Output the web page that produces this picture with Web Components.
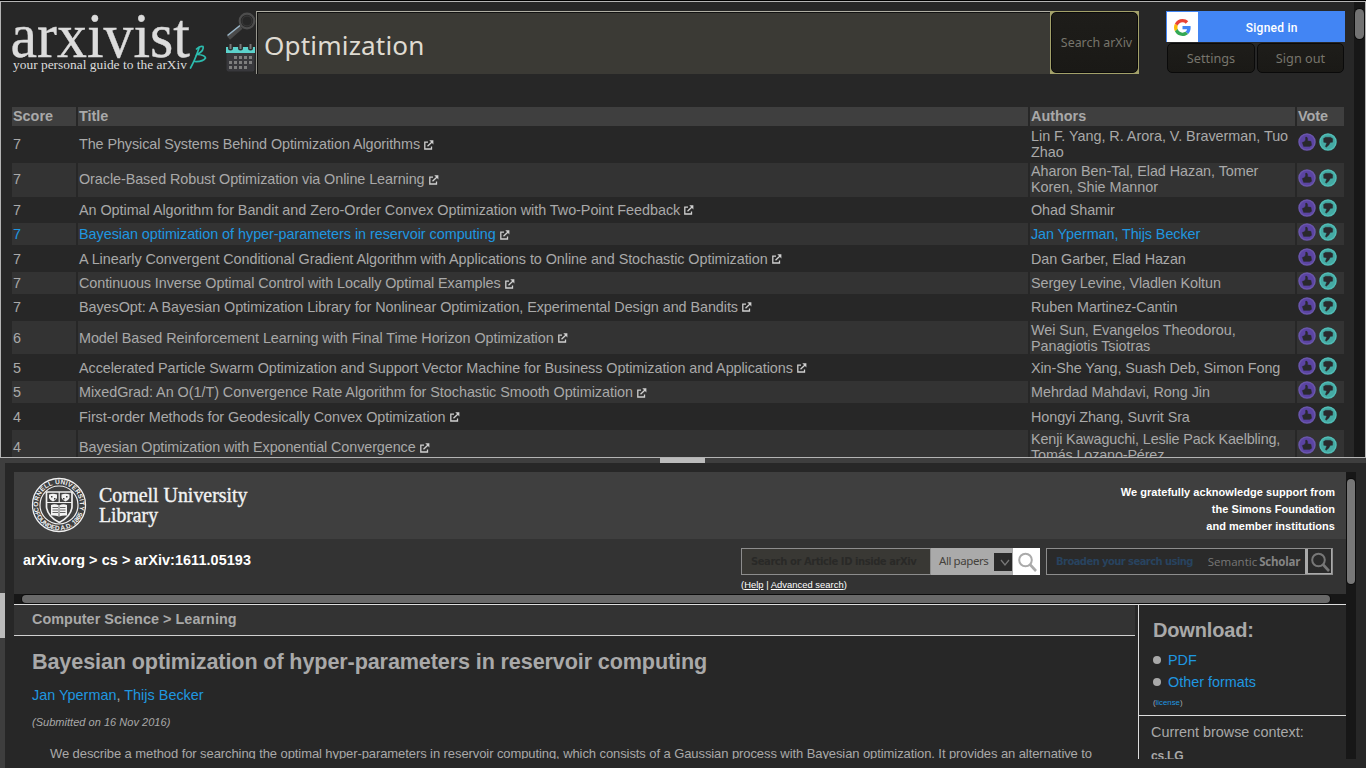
<!DOCTYPE html>
<html lang="en">
<head>
<meta charset="utf-8">
<title>arxivist</title>
<style>
html,body{margin:0;height:100%;background:#3e3e3e;overflow:hidden}
body{font-family:"Liberation Sans",Arial,sans-serif;color:#a9a9a9}
</style>
</head>
<body>
<arx-app></arx-app>
<script>
function define(name, html){
  customElements.define(name, class extends HTMLElement{
    connectedCallback(){
      if(this.shadowRoot) return;
      const t=document.createElement('template');
      t.innerHTML=typeof html==='function'?html(this):html;
      this.attachShadow({mode:'open'}).append(t.content.cloneNode(true));
    }
  });
}

define('arx-logo', `<style>
:host{display:block;width:200px;height:76px}
svg{display:block;overflow:visible}
</style>
<svg width="200" height="76" viewBox="10 6 200 76">
<text x="10.500" y="56.500" font-family="Liberation Serif,serif" font-size="62.500" textLength="179.500" lengthAdjust="spacingAndGlyphs" fill="#dcdcdc" stroke="#dcdcdc" stroke-width=".4">arxivist</text>
<text x="13" y="69" font-family="Liberation Serif,serif" font-size="13.500" textLength="174" lengthAdjust="spacingAndGlyphs" fill="#dcdcdc">your personal guide to the arXiv</text>
<path d="M190.500 68Q195 60 199 48M196.500 49Q200 45.500 203 46.500 204.500 50 197.500 54.500 205 55 205.500 58 203 62 194.500 61.500" fill="none" stroke="#2cbcae" stroke-width="1.700" stroke-linecap="round"/>
</svg>`);

define('arx-tools', `<style>:host{display:block;width:31px;height:64px}svg{display:block}</style>
<svg width="31" height="64" viewBox="225 9 31 64">
<g fill="none"><path d="M228.500 38 241 27" stroke="#4a4a4a" stroke-width="4.500"/><path d="M227.500 35.500 240 25.500" stroke="#9ab6c8" stroke-width="1.600"/><circle cx="247" cy="21" r="7.300" stroke="#4d4d4d" stroke-width="2.200"/><circle cx="247" cy="21" r="5" stroke="#3a3a3a"/></g>
<rect x="226.500" y="52" width="28" height="19.500" rx="2" fill="#38383c"/>
<rect x="226" y="47" width="29" height="6" fill="#5cd2cc"/>
<g fill="#2b2b2b"><circle cx="230.500" cy="48" r="2.500"/><circle cx="240.500" cy="48" r="2.500"/><circle cx="250.500" cy="48" r="2.500"/></g>
<g stroke="#777" stroke-width="2"><path d="M230.500 44v5M240.500 44v5M250.500 44v5"/></g>
<g stroke="#7e7e7e" stroke-width="3" stroke-dasharray="3 2"><path d="M234 57.500h18M229 62.500h23M229 67.500h18"/></g>
</svg>`);

define('google-badge', `<style>
:host{display:flex;height:31px;width:178.500px;background:#4285f4}
.g{width:32px;background:#fff;display:flex;align-items:center;justify-content:center;box-sizing:border-box;border:1px solid #4285f4;border-width:1px 0 0 1px}
.t{flex:1;display:flex;align-items:center;justify-content:center;color:#fff;font:500 12px Roboto,sans-serif;letter-spacing:.25px;padding:2px 0 0 1px;box-sizing:border-box}
</style><div class="g"><svg width="17" height="17" viewBox="0 0 48 48"><path fill="#EA4335" d="M24 9.500c3.540 0 6.710 1.220 9.210 3.600l6.850-6.850C35.900 2.380 30.470 0 24 0 14.620 0 6.510 5.380 2.560 13.220l7.980 6.190C12.430 13.720 17.740 9.500 24 9.500z"/><path fill="#4285F4" d="M46.980 24.550c0-1.570-.15-3.090-.38-4.550H24v9.020h12.940c-.58 2.960-2.260 5.480-4.780 7.180l7.730 6c4.510-4.180 7.090-10.360 7.090-17.650z"/><path fill="#FBBC05" d="M10.530 28.590c-.48-1.450-.76-2.990-.76-4.590s.27-3.140.76-4.590l-7.980-6.190C.92 16.460 0 20.120 0 24c0 3.880.92 7.540 2.560 10.780z"/><path fill="#34A853" d="M24 48c6.480 0 11.930-2.130 15.890-5.810l-7.730-6c-2.150 1.450-4.920 2.300-8.160 2.300-6.260 0-11.570-4.220-13.470-9.910l-7.980 6.190C6.510 42.620 14.620 48 24 48z"/></svg></div><div class="t"><slot></slot></div>`);

define('dark-button', `<style>
:host{display:flex;align-items:center;justify-content:center;box-sizing:border-box;height:30px;border:1px solid #0a0a0a;border-radius:5px;background:linear-gradient(#1e1d1a,#1a1916);color:#77756c;font:12.700px "Noto Sans",sans-serif}
</style><slot></slot>`);

define('top-bar', `<style>
:host{display:flex;align-items:flex-start;height:105px;padding:4px 0 0 9px;box-sizing:border-box}
arx-tools{margin:3px 0 0 15px}
.search{display:flex;margin-top:5px;width:883px;height:63px;box-sizing:border-box}
.q{width:794px;box-sizing:border-box;border-top:1px solid #b0afa4;border-left:1px solid #98978e;background:#3b3a35;box-shadow:inset 0 1px #111,inset 1px 0 #111;font:26px "Noto Sans",sans-serif;letter-spacing:.15px;color:#dfdbd2;display:flex;align-items:center;padding:3px 0 0 7px}
.q span{display:block;transform:scaleX(1.004);transform-origin:0 0}
.b{width:89px;height:63px;box-sizing:border-box;border:1px solid #a3a16a;background:#a3a16a}
.b dark-button{height:61px;padding-left:4px;font-size:12.400px}
.acct{margin:5px 0 0 27px;width:178.500px}
.row{display:flex;gap:2px;padding-left:1px;margin-top:1px}
.row dark-button{width:88px}.row dark-button+dark-button{width:87px}
</style>
<arx-logo></arx-logo><arx-tools></arx-tools>
<div class="search"><div class="q"><span>Optimization</span></div><div class="b"><dark-button>Search arXiv</dark-button></div></div>
<div class="acct"><google-badge>Signed in</google-badge><div class="row"><dark-button>Settings</dark-button><dark-button>Sign out</dark-button></div></div>`);

define('ext-icon', `<style>:host{display:inline-block;width:10px;height:10px;margin-left:4px}svg{display:block}</style>
<svg width="10" height="10" viewBox="0 0 10 10" fill="none" stroke="#d0d0d0" stroke-width="1.300"><path d="M4 2.200H.8V9H7.500V6.500M3.500 6.300 8 2"/><path d="M5.300.3h4.100V4.500z" fill="#d0d0d0" stroke="none"/></svg>`);

define('vote-icon', el=>{
const down=el.hasAttribute('down');
return `<style>:host{display:block;width:18px;height:18px}svg{display:block}</style>
<svg width="18" height="18" viewBox="0 0 18 18"><circle cx="9" cy="9" r="8" fill="${down?'#45aaa4':'#5b44a3'}" stroke="${down?'#51bdb6':'#6a56ac'}" stroke-width="1.500"/><path d="${down?'M4.500 5.500 6.500 4.200 11.500 4.200 13.800 5.700 13.600 9.200 11.300 9.500Q10.300 12.500 7.300 14.300L6.300 13.600 7.700 10 4.700 9.300Z':'M4.200 9.400 6.500 8.600Q8 6.800 7.500 4.200L8.800 4Q10.200 5.700 9.600 7.800L13 8.300 13.700 12.200 11.700 13.600 5.600 13.400Z'}" fill="#29292d" stroke="#29292d" stroke-width=".3" stroke-linejoin="round"/></svg>`});

define('result-row', el=>`<style>
:host{display:grid;grid-template-columns:64px 950px 265px 47px;column-gap:2px;box-sizing:border-box;padding-bottom:2px;height:${el.getAttribute('h')}px;color:${el.hasAttribute('active')?'#1f97e0':'#a9a9a9'};font-size:14.400px;line-height:16px}
.c{padding:0 1px ${el.getAttribute('lift')}px;box-sizing:border-box;min-width:0;display:flex;align-items:center;${el.hasAttribute('alt')?'background:#333':''}}
.t{white-space:nowrap}.t span{letter-spacing:${el.getAttribute('track-title')}px}.t ext-icon{margin-top:1px}
.c.v{gap:3px;padding-bottom:4px}
.a{white-space:pre-line;letter-spacing:${el.getAttribute('track-authors')}px}
</style>
<div class="c"><span>${el.getAttribute('score')}</span></div><div class="c t"><span>${el.getAttribute('title-text')}</span><ext-icon></ext-icon></div><div class="c a"><span>${el.getAttribute('authors')}</span></div><div class="c v"><vote-icon></vote-icon><vote-icon down></vote-icon></div>`);

/* score, title, authors, row height, title tightening, author tightening, text lift (px) */
const papers=[
[7,'The Physical Systems Behind Optimization Algorithms','Lin F. Yang, R. Arora, V. Braverman, Tuo\nZhao',36,4.5,1],
[7,'Oracle-Based Robust Optimization via Online Learning','Aharon Ben-Tal, Elad Hazan, Tomer\nKoren, Shie Mannor',35,4,2,2],
[7,'An Optimal Algorithm for Bandit and Zero-Order Convex Optimization with Two-Point Feedback','Ohad Shamir',25,4,1],
[7,'Bayesian optimization of hyper-parameters in reservoir computing','Jan Yperman, Thijs Becker',24,2.5,2],
[7,'A Linearly Convergent Conditional Gradient Algorithm with Applications to Online and Stochastic Optimization','Dan Garber, Elad Hazan',25,6.5,2],
[7,'Continuous Inverse Optimal Control with Locally Optimal Examples','Sergey Levine, Vladlen Koltun',24,5.5,3],
[7,'BayesOpt: A Bayesian Optimization Library for Nonlinear Optimization, Experimental Design and Bandits','Ruben Martinez-Cantin',25,6.5,1.5,2],
[6,'Model Based Reinforcement Learning with Final Time Horizon Optimization','Wei Sun, Evangelos Theodorou,\nPanagiotis Tsiotras',35,4.5,2],
[5,'Accelerated Particle Swarm Optimization and Support Vector Machine for Business Optimization and Applications','Xin-She Yang, Suash Deb, Simon Fong',25,8.5,3],
[5,'MixedGrad: An O(1/T) Convergence Rate Algorithm for Stochastic Smooth Optimization','Mehrdad Mahdavi, Rong Jin',24,3.5,1],
[4,'First-order Methods for Geodesically Convex Optimization','Hongyi Zhang, Suvrit Sra',25,3,2],
[4,'Bayesian Optimization with Exponential Convergence','Kenji Kawaguchi, Leslie Pack Kaelbling,\nTomás Lozano-Pérez',36,5,6]];
const track=(text,px)=>(-px/text.split('\n')[0].length).toFixed(4);

define('results-table', `<style>
:host{display:block;padding-left:11px;width:1332px}
.h{display:grid;grid-template-columns:64px 950px 265px 47px;column-gap:2px;height:18px;margin-bottom:2px;font:bold 14.400px/19px "Liberation Sans",sans-serif;color:#a9a9a9}
.h div{background:#3f3f3f;padding-left:1px}
</style><div class="h"><div>Score</div><div>Title</div><div>Authors</div><div>Vote</div></div>
${papers.map((p,i)=>`<result-row score="${p[0]}" title-text="${p[1]}" authors="${p[2]}" h="${p[3]}" lift="${p[6]||0}" track-title="${track(p[1],p[4])}" track-authors="${track(p[2],p[5])}" ${i%2?'alt':''} ${i===3?'active':''}></result-row>`).join('')}`);

define('scroll-bar', el=>`<style>
:host{display:block;box-sizing:border-box;background:#171717;${el.getAttribute('box')}}
div{background:#696969;border-radius:5px;box-shadow:0 0 0 1px #0c0c0c;${el.getAttribute('thumb')}}
</style><div></div>`);

define('results-pane', `<style>
:host{display:flex;box-sizing:border-box;height:458px;border-top:1px solid #000;overflow:hidden;}
.in{flex:1;display:flex;border:1px solid #b4b4b4;background:#272727;overflow:hidden;box-sizing:border-box;height:457px}
.c{flex:1;height:456px;min-width:0}
</style><div class="in"><div class="c"><top-bar></top-bar><results-table></results-table></div><scroll-bar box="width:11px;padding:7px 1px 0 1px" thumb="height:30px;background:#727272"></scroll-bar></div>`);

define('cornell-brand', `<style>:host{display:block}svg{display:block}</style>
<svg width="250" height="67" viewBox="14 472 250 67" font-family="Liberation Serif,serif" fill="#f2f2f2">
<g fill="none" stroke="#f0f0f0"><circle cx="59" cy="505" r="26.500" stroke-width="1.300"/><circle cx="59" cy="505" r="19" stroke-width="1.200"/>
<path d="M46.500 492h25.500v15q-1 9.500-12.700 15.500-11.800-6-12.800-15.500z" stroke-width="1.700"/><path d="M46.500 502.500h25.500M59.200 492v10" stroke-width="1.200"/></g>
<path d="M49 494.500q4-1.500 8 0v3.500q-1.500 3-4 3.500-2.500-.5-4-3.500zM61.500 494.500q4-1.500 8 0v3.500q-1.500 3-4 3.500-2.500-.5-4-3.500z"/><path d="M51 496h1.500v1.500H51zM54 498h1.500v1.500H54zM63 498h1.500v1.500H63zM66 496h1.500v1.500H66z" fill="#3e3e3e"/>
<path d="M51 505q4-1.500 8 .5 4-2 8-.5v10.500q-4-.5-8 1-4-1.500-8-1z"/><path d="M52.500 507.500h5.500M60 507.500h5.500M52.500 510h5.500M60 510h5.500M52.500 512.500h5.500M60 512.500h5.500M59 505.500v10.500" stroke="#3e3e3e" stroke-width=".8"/>
<defs><path id="a" d="M39.110 511.460A20.900 20.900 0 1 1 78.890 511.460"/><path id="b" d="M34.300 510A25.200 25.200 0 0 0 83.700 510"/></defs>
<text font-size="6.500" font-weight="bold" font-family="Liberation Sans"><textPath href="#a" textLength="77" lengthAdjust="spacing">CORNELL UNIVERSITY</textPath></text>
<text font-size="6.500" font-weight="bold" font-family="Liberation Sans"><textPath href="#b" startOffset="3" textLength="62" lengthAdjust="spacing">FOUNDED A.D. 1865</textPath></text>
<g font-size="20.500" stroke="#f2f2f2" stroke-width=".4"><text x="99" y="501.500" textLength="148.500" lengthAdjust="spacingAndGlyphs">Cornell University</text><text x="99" y="522" textLength="59" lengthAdjust="spacingAndGlyphs">Library</text></g>
</svg>`);

define('mag-icon', `<style>:host{display:block}svg{display:block}</style><svg width="22" height="22" viewBox="0 0 22 22" fill="none" stroke="currentColor"><circle cx="9.500" cy="9" r="6.300" stroke-width="2"/><path d="M14 13.500 20 20" stroke-width="2.600"/></svg>`);

define('arxiv-head', `<style>
:host{display:block;width:1332px;height:122px;background:#333;font-family:"Liberation Sans",sans-serif}
.top{height:67px;background:#3f3f3f;display:flex;justify-content:space-between}
.ack{color:#fff;font:bold 11px/17px "Liberation Sans",sans-serif;letter-spacing:.045px;text-align:right;padding:12px 11px 0 0}
.bot{display:flex;align-items:flex-start;height:55px}
.bc{color:#fff;font-weight:bold;font-size:14.400px;letter-spacing:.08px;line-height:18px;padding:12px 0 0 9px;width:718px}
.s{display:flex;height:27px;margin-top:9px;box-sizing:border-box}
.i{width:190px;box-sizing:border-box;border:1px solid #8d8d8d;background:#393834;color:#292927;font:bold 10px/25px "DejaVu Sans",sans-serif;padding-left:9px;white-space:nowrap;overflow:hidden;letter-spacing:-.45px}
.sel{width:82px;box-sizing:border-box;background:#aaa;border:1px solid #aaa;color:#45423c;font:11.500px/24px "Noto Sans",sans-serif;letter-spacing:-.42px;display:flex;padding-left:7px;justify-content:space-between}
.sel div{width:18px;height:18px;background:#2a2a2a;margin-top:4px}
.sel svg{display:block;margin:6px 0 0 6px}
.m{width:27px;height:27px;background:#fff;color:#aaa;padding:3px 0 0 3px;box-sizing:border-box}
.hp{color:#fff;font-size:9.400px;line-height:13px;letter-spacing:.03px;padding-top:3px}u{text-underline-offset:1px}
.ss{margin-left:6px;width:287px;border:1px solid #8d8d8d;background:#2a2a2a;font:bold 10px/25px "DejaVu Sans",sans-serif;color:#28435f}
.ss .k{width:162px;padding-left:9px;box-sizing:border-box;white-space:nowrap;letter-spacing:-.58px}.ss .r{font:11.500px/25px "Open Sans",sans-serif;color:#777;width:98px;white-space:nowrap}
.ss .r b{margin-left:2px;color:#858585;letter-spacing:-.22px}
.ss .z{width:27px;border-left:3px solid #aaa;border-right:1px solid #aaa;border-bottom:1px solid #aaa;color:#777;padding:2px 0 0 1px;box-sizing:border-box}
</style><div class="top"><cornell-brand></cornell-brand><div class="ack">We gratefully acknowledge support from<br>the Simons Foundation<br>and member institutions</div></div>
<div class="bot"><div class="bc">arXiv.org &gt; cs &gt; arXiv:1611.05193</div>
<div><div class="s"><div class="i">Search or Article ID inside arXiv</div><div class="sel"><span>All papers</span><div><svg width="10" height="8" fill="none" stroke="#777" stroke-width="1.300"><path d="M1 1 5 6 9 1"/></svg></div></div><div class="m"><mag-icon></mag-icon></div></div><div class="hp">(<u>Help</u> | <u>Advanced search</u>)</div></div>
<div class="s ss"><div class="k">Broaden your search using</div><div class="r">Semantic<b>Scholar</b></div><div class="z"><mag-icon></mag-icon></div></div></div>`);

define('paper-body', `<style>
:host{display:flex;width:1332px;height:155px;border-top:1px solid #dedede;box-sizing:border-box;overflow:hidden;font-family:"Liberation Sans",sans-serif}
.l{width:1121px;margin-right:3px}
.sub{height:31px;box-sizing:border-box;border-bottom:1px solid #d0d0d0;background:#333;font:bold 14.400px/29px "Liberation Sans",sans-serif;letter-spacing:.04px;padding-left:18px}
h1{font-size:21.600px;line-height:26px;letter-spacing:-.12px;margin:13px 0 0 18px}
.au{color:#1f97e0;font-size:14.400px;line-height:18px;letter-spacing:.02px;margin:11px 0 0 18px}.au i{color:#a9a9a9;font-style:normal}
.d{font:italic 11px/14px "Liberation Sans",sans-serif;letter-spacing:.03px;margin:11px 0 0 18px}
p{font-size:13px;line-height:18px;letter-spacing:-.086px;margin:16px 0 0 36px;white-space:nowrap}
.r{flex:1;border-left:1px solid #ddd}
.dl{height:111px;box-sizing:border-box;border-bottom:1px solid #ddd;padding:13px 0 0 14px}
h2{font-size:20px;line-height:24px;letter-spacing:-.15px;margin:0 0 7px}
.li{display:flex;align-items:center;gap:7px;height:22px;font-size:14.400px;color:#1f97e0}.li:before{content:"";width:8px;height:8px;border-radius:4px;background:#a9a9a9}
.lic{font-size:7.800px;line-height:10px;margin-top:5px;color:#a9a9a9}.lic span{color:#1f97e0}
.cx{font-size:14.400px;line-height:18px;padding:7px 0 0 12px}.cx b{display:block;font-size:12px;letter-spacing:-.2px;line-height:16px;margin-top:7px}
</style><div class="l"><div class="sub">Computer Science &gt; Learning</div><h1>Bayesian optimization of hyper-parameters in reservoir computing</h1><div class="au">Jan Yperman<i>, </i>Thijs Becker</div><div class="d">(Submitted on 16 Nov 2016)</div><p>We describe a method for searching the optimal hyper-parameters in reservoir computing, which consists of a Gaussian process with Bayesian optimization. It provides an alternative to</p></div>
<div class="r"><div class="dl"><h2>Download:</h2><div class="li">PDF</div><div class="li">Other formats</div><div class="lic">(<span>license</span>)</div></div><div class="cx">Current browse context:<b>cs.LG</b></div></div>`);

define('paper-pane', `<style>
:host{display:flex;height:305px;background:#272727;box-sizing:border-box;padding:9px}
.m{width:1332px}
</style><div class="m"><arxiv-head></arxiv-head><scroll-bar box="height:10px;padding:1px 16px 0 8px" thumb="height:8px"></scroll-bar><paper-body></paper-body></div><scroll-bar box="width:10px;height:287px;padding:7px 1px 0 1px" thumb="height:105px;background:#777"></scroll-bar>`);

define('split-divider', `<style>:host{display:flex;justify-content:center;height:5px;background:#3e3e3e;padding-right:1px}div{width:45px;background:#bbb}</style><div></div>`);
define('side-handle', `<style>:host{display:flex;width:5px;align-items:flex-start;padding-top:130px;background:#3e3e3e;box-sizing:border-box}div{width:5px;height:45px;background:#bbb}</style><div></div>`);
define('arx-app', `<style>:host{display:block;width:1366px;height:768px;overflow:hidden}.b{display:flex}paper-pane{flex:1}</style><results-pane></results-pane><split-divider></split-divider><div class="b"><side-handle></side-handle><paper-pane></paper-pane></div>`);
</script>
</body>
</html>
